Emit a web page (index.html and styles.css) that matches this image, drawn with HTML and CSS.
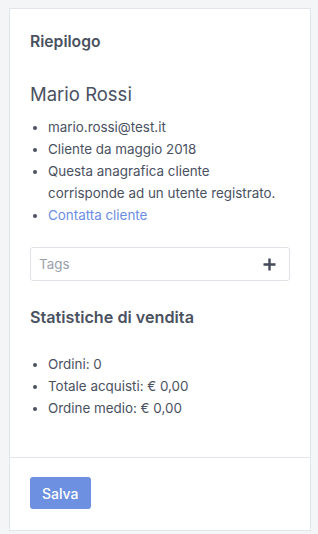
FILE: index.html
```html
<!DOCTYPE html>
<html lang="it">
<head>
    <meta charset="UTF-8">
    <meta name="viewport" content="width=device-width, initial-scale=1.0">
    <title>Riepilogo</title>
    <link rel="stylesheet" href="styles.css">
</head>
<body>
    <div class="card">
        <div class="card-body">
            <h3 class="card-title">Riepilogo</h3>
            <h2 class="customer-name">Mario Rossi</h2>
            <ul class="info-list">
                <li>mario.rossi@test.it</li>
                <li>Cliente da maggio 2018</li>
                <li>Questa anagrafica cliente corrisponde ad un utente registrato.</li>
                <li><a href="#">Contatta cliente</a></li>
            </ul>
            <div class="tags">
                <span class="tags-placeholder">Tags</span>
                <svg class="tags-add" width="13" height="13" viewBox="0 0 13 13">
                    <path d="M6.5 0.5v12M0.5 6.5h12" stroke="#434a59" stroke-width="2.4"/>
                </svg>
            </div>
            <h3 class="section-title">Statistiche di vendita</h3>
            <ul class="info-list stats">
                <li>Ordini: 0</li>
                <li>Totale acquisti: € 0,00</li>
                <li>Ordine medio: € 0,00</li>
            </ul>
        </div>
        <div class="card-footer">
            <button class="btn">Salva</button>
        </div>
    </div>
</body>
</html>
```

FILE: styles.css
```css
body{
    margin: 0;
    padding: 8px 7px 4px 9px;
    background-color: #f4f5f7;
    color: #4a5161;
    font-family: Inter, "Noto Sans", sans-serif;
}

.card{
    background-color: #ffffff;
    border: 1px solid #e2e5ea;
}

.card-body{
    padding: 20px 20px 38px;
}

.card-title{
    margin: 0;
    font-size: 15.7px;
    line-height: 26px;
    font-weight: 600;
}

.customer-name{
    margin: 26px 0 0;
    font-size: 18.5px;
    line-height: 26px;
    font-weight: 400;
}

.info-list{
    margin: 9px 0 0;
    padding-left: 18px;
    font-size: 13.4px;
    line-height: 22px;
}

.info-list a{
    color: #6b8de3;
    text-decoration: none;
}

.tags{
    margin-top: 21px;
    height: 32px;
    border: 1px solid #dfe2e7;
    border-radius: 3px;
    display: flex;
    align-items: center;
    justify-content: space-between;
    padding: 0 13px 0 8px;
}

.tags-placeholder{
    font-size: 13.4px;
    color: #9aa0a9;
}

.section-title{
    margin: 23px 0 0;
    font-size: 16.2px;
    line-height: 26px;
    font-weight: 600;
}

.stats{
    margin-top: 23px;
}

.card-footer{
    border-top: 1px solid #e2e5ea;
    padding: 19px 20px 21px;
}

.btn{
    background-color: #6d90e0;
    color: #ffffff;
    border: none;
    border-radius: 3px;
    font-family: Inter, "Noto Sans", sans-serif;
    font-size: 14px;
    font-weight: 500;
    height: 32px;
    padding: 0 12px;
}
```
